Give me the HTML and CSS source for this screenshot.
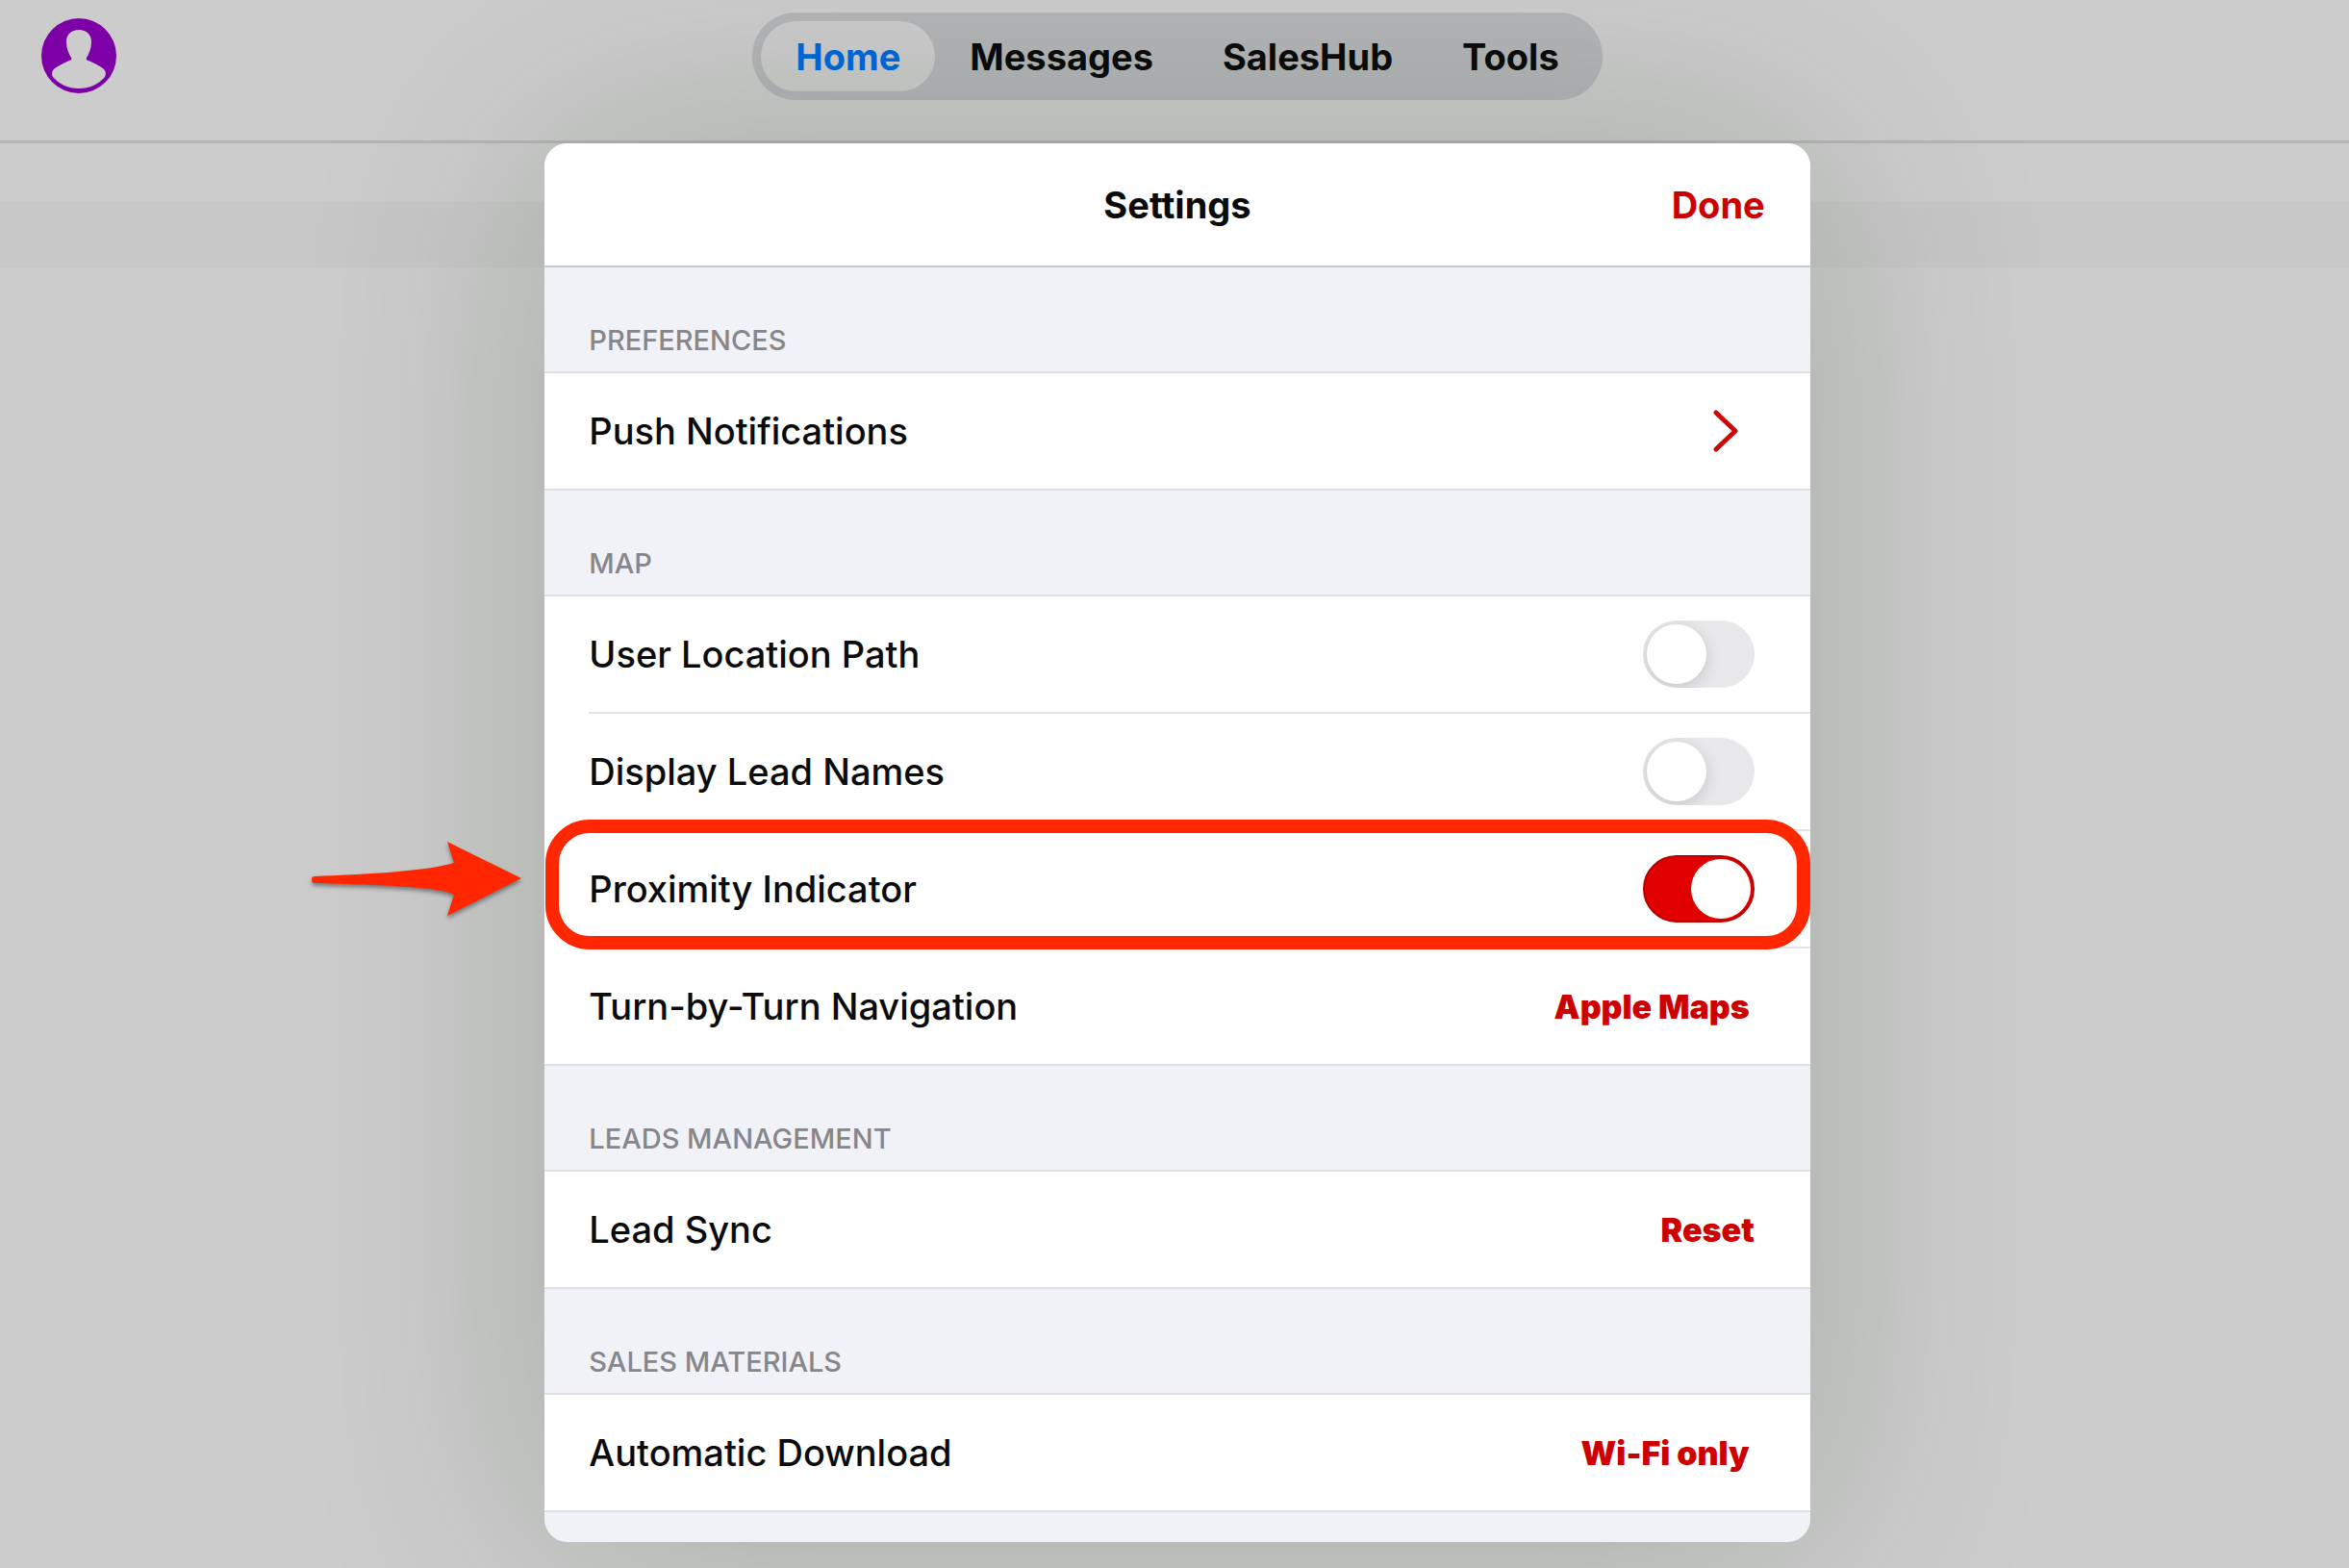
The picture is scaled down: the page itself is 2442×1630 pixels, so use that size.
FILE: index.html
```html
<!DOCTYPE html>
<html lang="en">
    <head>
        <meta charset="utf-8">
        <title>Settings</title>
        <link rel="stylesheet" href="styles.css">
    </head>

    <body>
        <header class="topbar">
            <button class="avatar" type="button" aria-label="Profile">
                <svg viewBox="0 0 78 78">
                    <path fill="#7c00a6" fill-rule="evenodd" d="M39 0a39 39 0 1 1 0 78a39 39 0 1 1 0-78zM39 12c-8 0-13 5-13 12c0 7 2 12 5 17c1 2 0 2-2 3c-6 3-11 5-15 8c-4 3-3 7-2 9c7 8 16 12 27 12s20-4 27-12c1-2 2-6-2-9c-4-3-9-5-15-8c-2-1-3-1-2-3c3-5 5-10 5-17c0-7-5-12-13-12z"/>
                </svg>
            </button>
            <nav class="tabs">
                <a class="current" href="#home">Home</a>
                <a href="#messages">Messages</a>
                <a href="#saleshub">SalesHub</a>
                <a href="#tools">Tools</a>
            </nav>
        </header>

        <main class="stage">
            <div class="backdrop"></div>

            <div class="sheet" role="dialog" aria-labelledby="title">
                <div class="sheet-head">
                    <h1 id="title">Settings</h1>
                    <button class="done" type="button">Done</button>
                </div>

                <section>
                    <h2>PREFERENCES</h2>
                    <ul>
                        <li>
                            <span>Push Notifications</span>
                            <button class="more" type="button" aria-label="Push Notifications">
                                <svg viewBox="0 0 26 44">
                                    <path d="M3 3L23 22L3 41"/>
                                </svg>
                            </button>
                        </li>
                    </ul>
                </section>

                <section>
                    <h2>MAP</h2>
                    <ul>
                        <li>
                            <label for="path">User Location Path</label>
                            <input class="switch" id="path" type="checkbox">
                        </li>
                        <li>
                            <label for="names">Display Lead Names</label>
                            <input class="switch" id="names" type="checkbox">
                        </li>
                        <li class="marked">
                            <svg class="arrow" viewBox="0 0 218 78">
                                <path d="M3 36C50 34 120 31 148 22L141 0L218 38L141 77L148 55C132 46 60 45 3 43Q0 43 0 39Q0 36 3 36z"/>
                            </svg>
                            <label for="proximity">Proximity Indicator</label>
                            <input class="switch" id="proximity" type="checkbox" checked>
                        </li>
                        <li>
                            <span>Turn-by-Turn Navigation</span>
                            <button class="value" type="button">Apple Maps</button>
                        </li>
                    </ul>
                </section>

                <section>
                    <h2>LEADS MANAGEMENT</h2>
                    <ul>
                        <li>
                            <span>Lead Sync</span>
                            <button class="action" type="button">Reset</button>
                        </li>
                    </ul>
                </section>

                <section>
                    <h2>SALES MATERIALS</h2>
                    <ul>
                        <li>
                            <span>Automatic Download</span>
                            <button class="value" type="button">Wi-Fi only</button>
                        </li>
                    </ul>
                </section>
            </div>
        </main>
    </body>
</html>
```

FILE: styles.css
```css
* {
    box-sizing: border-box;
}

body {
    margin: 0;
    min-height: 100vh;
    background: #cccccc;
    color: #0b0b0b;
    font-family: Inter, "Liberation Sans", sans-serif;
}

button {
    padding: 0;
    border: 0;
    background: none;
    font-family: inherit;
    cursor: pointer;
}

svg {
    display: block;
}

.topbar {
    display: grid;
    grid-template-columns: 1fr auto 1fr;
    align-items: start;
    height: 149px;
    padding: 13px 37px 0 43px;
    border-bottom: 3px solid #b4b4b4;
}

.avatar {
    width: 78px;
    height: 78px;
    margin-top: 6px;
}

.tabs {
    display: flex;
    height: 91px;
    padding: 9px;
    border-radius: 46px;
    background: #b4b5b8;
}
.tabs a {
    display: flex;
    align-items: center;
    padding: 0 36px;
    border-radius: 37px;
    color: #0b0b0b;
    font-size: 38px;
    font-weight: 650;
    text-decoration: none;
}
.tabs a.current {
    background: #cccccc;
    color: #0068da;
}

/* The sheet lies over the dimmed page */
.stage {
    display: grid;
    justify-items: center;
    padding-left: 6px;
}
.backdrop {
    grid-area: 1 / 1;
    justify-self: stretch;
    height: 68px;
    margin: 61px 0 0 -6px;
    background: #c7c7c7;
}

.sheet {
    grid-area: 1 / 1;
    position: relative;
    width: 54%;
    margin-bottom: 27px;
    padding-bottom: 31px;
    border-radius: 24px;
    background: #f1f2f7;
    box-shadow: 0 0 280px rgba(0, 40, 0, 0.2);
}

.sheet-head {
    display: grid;
    grid-template-columns: 1fr auto 1fr;
    align-items: center;
    height: 129px;
    padding: 0 47px;
    border-bottom: 2px solid #c6c7cb;
    border-radius: 24px 24px 0 0;
    background: #ffffff;
}
.sheet-head h1 {
    grid-column: 2;
    margin: 0;
    font-size: 38px;
    font-weight: 700;
}
.done {
    justify-self: end;
    color: #cc0000;
    font-size: 38px;
    font-weight: 700;
}

section > h2 {
    display: flex;
    align-items: flex-end;
    height: 110px;
    margin: 0;
    padding: 0 46px 15px;
    border-bottom: 2px solid #dfdfe4;
    color: #86868b;
    font-size: 29px;
    font-weight: 550;
    line-height: 34px;
}

ul {
    margin: 0;
    padding: 0;
    list-style: none;
    background: #ffffff;
    border-bottom: 2px solid #dfdfe4;
}

li {
    position: relative;
    display: flex;
    align-items: center;
    justify-content: space-between;
    height: 120px;
    margin-left: 46px;
    padding-right: 58px;
    font-size: 38px;
    font-weight: 500;
}
li + li {
    height: 122px;
    border-top: 2px solid #e3e3e5;
}

.more {
    width: 26px;
    height: 44px;
    margin-right: 17px;
}
.more path {
    fill: none;
    stroke: #cc0a0a;
    stroke-width: 5;
    stroke-linecap: round;
    stroke-linejoin: round;
}

.value,
.action {
    color: #cc0000;
    font-size: 34px;
    font-weight: 900;
}
.value {
    padding-right: 5px;
}

.switch {
    appearance: none;
    width: 116px;
    height: 70px;
    margin: 0;
    padding: 4px;
    border-radius: 35px;
    background: #e8e8eb;
    overflow: hidden;
}
.switch::before {
    content: "";
    display: block;
    width: 62px;
    height: 62px;
    border-radius: 50%;
    background: #ffffff;
    box-shadow: 0 4px 16px rgba(0, 0, 0, 0.15);
}
.switch:checked {
    background: #e00000;
    border: 2px solid #b80000;
    padding: 2px;
}
.switch:checked::before {
    margin-left: auto;
    box-shadow: none;
}

/* Callout drawn round one row, with an arrow pointing to it */
.marked {
    z-index: 1;
}
.marked::after {
    content: "";
    position: absolute;
    inset: -12px 0 -3px -45px;
    border: 14px solid #ff2600;
    border-radius: 46px;
    pointer-events: none;
}
.arrow {
    position: absolute;
    top: 11px;
    right: 100%;
    width: 218px;
    height: 78px;
    margin-right: 70px;
    overflow: visible;
    filter: drop-shadow(0 3px 2px rgba(0, 0, 0, 0.4));
}
.arrow path {
    fill: #ff2600;
}
```
